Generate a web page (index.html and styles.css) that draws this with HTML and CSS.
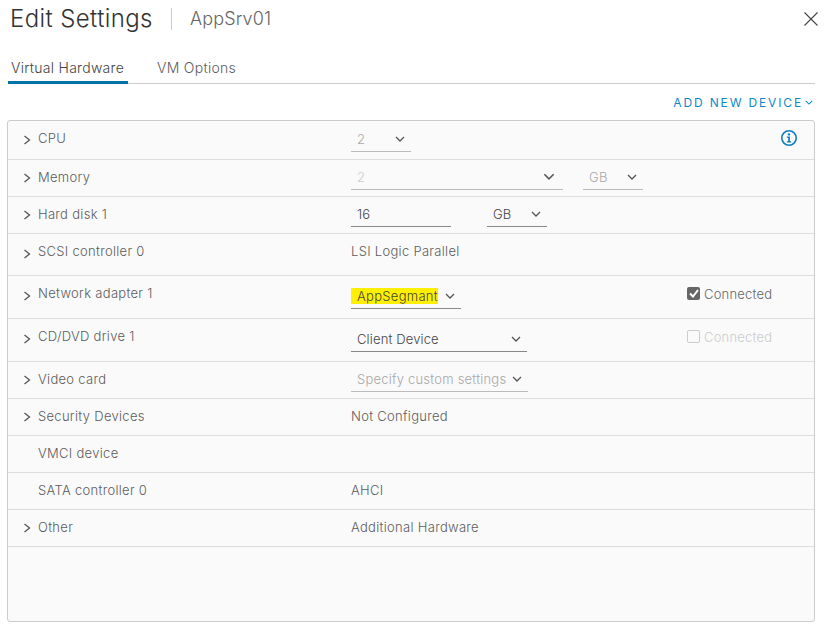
FILE: index.html
```html
<!DOCTYPE html>
<html lang="en">
<head>
<meta charset="utf-8">
<title>Edit Settings</title>
<link rel="stylesheet" href="styles.css">
</head>
<body>
<svg class="defs" width="0" height="0" aria-hidden="true">
  <symbol id="chev-r" viewBox="0 0 8 10"><path d="M1.5 1 L6.5 5 L1.5 9" fill="none" stroke="currentColor" stroke-width="1.3"/></symbol>
  <symbol id="chev-d" viewBox="0 0 10 6"><path d="M1 1 L5 5 L9 1" fill="none" stroke="currentColor" stroke-width="1.3"/></symbol>
</svg>
<header class="head">
  <h1 class="title">Edit Settings</h1>
  <span class="vm">AppSrv01</span>
  <svg class="close" width="14" height="14" viewBox="0 0 14 14"><path d="M0.5 0.5 L13.5 13.5 M13.5 0.5 L0.5 13.5" fill="none" stroke="#444" stroke-width="1.1"/></svg>
</header>
<nav class="tabs">
  <span class="tab active">Virtual Hardware</span>
  <span class="tab">VM Options</span>
</nav>
<div class="actions">
  <span class="add">ADD NEW DEVICE</span>
  <svg class="add-chev" width="8" height="5"><use href="#chev-d"/></svg>
</div>
<section class="panel">
  <div class="row r39">
    <svg class="cr"><use href="#chev-r"/></svg><span class="label">CPU</span>
    <div class="val">
      <span class="sel dis w60"><span class="t">2</span><svg class="cd"><use href="#chev-d"/></svg></span>
    </div>
    <svg class="info" width="18" height="18" viewBox="0 0 18 18"><circle cx="9" cy="9" r="7.2" fill="none" stroke="#0e7fb8" stroke-width="1.6"/><circle cx="9" cy="5.4" r="1.2" fill="#0e7fb8"/><path d="M6.9 7.6 H9.9 V12.2 H11.2 V13.4 H6.9 V12.2 H8.2 V8.8 H6.9 Z" fill="#0e7fb8"/></svg>
  </div>
  <div class="row">
    <svg class="cr"><use href="#chev-r"/></svg><span class="label">Memory</span>
    <div class="val">
      <span class="sel faint w212"><span class="t">2</span><svg class="cd big"><use href="#chev-d"/></svg></span>
      <span class="sel dis w60 gap20"><span class="t">GB</span><svg class="cd"><use href="#chev-d"/></svg></span>
    </div>
  </div>
  <div class="row">
    <svg class="cr"><use href="#chev-r"/></svg><span class="label">Hard disk 1</span>
    <div class="val">
      <span class="sel on w100"><span class="t">16</span></span>
      <span class="sel on w60 gap36"><span class="t">GB</span><svg class="cd"><use href="#chev-d"/></svg></span>
    </div>
  </div>
  <div class="row r42 low">
    <svg class="cr"><use href="#chev-r"/></svg><span class="label">SCSI controller 0</span>
    <div class="val"><span class="plain">LSI Logic Parallel</span></div>
  </div>
  <div class="row r43 low">
    <svg class="cr"><use href="#chev-r"/></svg><span class="label">Network adapter 1</span>
    <div class="val">
      <span class="sel on w110 tall"><span class="t hl">AppSegmant</span><svg class="cd"><use href="#chev-d"/></svg></span>
    </div>
    <label class="check"><span class="box checked"><svg width="10" height="9" viewBox="0 0 10 9"><path d="M1 4.5 L4 7.5 L9 1" fill="none" stroke="#fff" stroke-width="2"/></svg></span>Connected</label>
  </div>
  <div class="row r43 low">
    <svg class="cr"><use href="#chev-r"/></svg><span class="label">CD/DVD drive 1</span>
    <div class="val">
      <span class="sel on w176 tall"><span class="t">Client Device</span><svg class="cd"><use href="#chev-d"/></svg></span>
    </div>
    <label class="check off"><span class="box"></span>Connected</label>
  </div>
  <div class="row">
    <svg class="cr"><use href="#chev-r"/></svg><span class="label">Video card</span>
    <div class="val">
      <span class="sel dis w177"><span class="t">Specify custom settings</span><svg class="cd"><use href="#chev-d"/></svg></span>
    </div>
  </div>
  <div class="row">
    <svg class="cr"><use href="#chev-r"/></svg><span class="label">Security Devices</span>
    <div class="val"><span class="plain">Not Configured</span></div>
  </div>
  <div class="row">
    <span class="cr"></span><span class="label">VMCI device</span>
  </div>
  <div class="row">
    <span class="cr"></span><span class="label">SATA controller 0</span>
    <div class="val"><span class="plain">AHCI</span></div>
  </div>
  <div class="row">
    <svg class="cr"><use href="#chev-r"/></svg><span class="label">Other</span>
    <div class="val"><span class="plain">Additional Hardware</span></div>
  </div>
</section>
</body>
</html>
```

FILE: styles.css
```css
* { box-sizing: border-box; }
html, body { margin: 0; padding: 0; }
body {
  width: 830px;
  height: 634px;
  overflow: hidden;
  background: #fff;
  font-family: Inter, "Liberation Sans", sans-serif;
  color: #5c5c5c;
}
.defs { position: absolute; }

.head {
  display: flex;
  align-items: center;
  height: 38px;
  padding: 0 12px 0 10px;
}
.title {
  margin: 0;
  font-size: 24px;
  font-weight: 300;
  line-height: 22px;
  color: #333;
  letter-spacing: 0.4px;
  width: 161px;
  white-space: nowrap;
}
.vm {
  border-left: 1px solid #ccc;
  height: 22px;
  line-height: 22px;
  padding-left: 18px;
  font-size: 18px;
  font-weight: 300;
  letter-spacing: 0.12px;
  color: #666;
}
.close { margin-left: auto; }

.tabs {
  display: flex;
  margin: 15px 15px 0 8px;
  height: 31px;
  border-bottom: 1px solid #ccc;
}
.tab {
  padding: 6px 3px 0;
  font-size: 14px;
  font-weight: 350;
  line-height: 18px;
  color: #5c5c5c;
  margin-right: 26px;
  letter-spacing: 0.28px;
}
.tab.active {
  color: #444;
  width: 120px;
  padding: 6px 0 0 3px;
  margin-right: 26px;
  border-bottom: 3px solid #0072a3;
  height: 31px;
}
.actions {
  display: flex;
  justify-content: flex-end;
  align-items: center;
  height: 36px;
  padding-right: 17px;
  color: #0e8ac8;
}
.add {
  font-size: 12px;
  font-weight: 400;
  letter-spacing: 1.85px;
}
.add-chev { margin-left: 2px; color: #0e8ac8; }

.panel {
  width: 808px;
  height: 502px;
  margin-left: 7px;
  background: #fafafa;
  border: 1px solid #ccc;
  border-radius: 3px;
}
.row {
  position: relative;
  display: flex;
  align-items: center;
  height: 37px;
  padding-left: 15px;
  border-bottom: 1px solid #ddd;
  font-size: 13px;
  font-weight: 350;
  letter-spacing: 0.3px;
}
.r39 { height: 39px; }
.r42 { height: 42px; }
.r43 { height: 43px; }
.row.low { align-items: flex-start; padding-top: 9px; }
.cr { width: 8px; height: 10px; flex: none; color: #555; margin-right: 7px; }
.low .cr { margin-top: 6px; }
.label { width: 313px; flex: none; white-space: nowrap; padding-bottom: 2px; }
.r39 .label { padding-bottom: 4px; }
.val { display: flex; align-items: center; }
.plain { padding-bottom: 2px; }

.sel {
  display: flex;
  align-items: center;
  justify-content: space-between;
  height: 23px;
  padding: 0 6px 2px 6px;
  border-bottom: 1px solid #888;
  color: #444;
  letter-spacing: 0.14px;
  white-space: nowrap;
}
.sel.tall { height: 24px; }
.w60 { width: 60px; }
.w100 { width: 100px; }
.w110 { width: 110px; padding-left: 0; }
.w176 { width: 176px; }
.w177 { width: 177px; }
.w212 { width: 212px; padding-right: 8px; }
.gap20 { margin-left: 20px; }
.gap36 { margin-left: 36px; }
.sel.dis { color: #a8a8a8; border-bottom-color: #bbb; letter-spacing: 0.22px; }
.sel.faint { color: #ccc; border-bottom-color: #bbb; }
.cd { width: 10px; height: 6px; color: #555; flex: none; }
.cd.big { width: 12px; height: 7px; }
.hl { background: #ffef00; color: #444; padding-left: 6px; margin-right: 6px; letter-spacing: 0.3px; }

.info { position: absolute; right: 16px; top: 8px; }

.check {
  position: absolute;
  left: 679px;
  top: 10px;
  display: flex;
  align-items: center;
  gap: 4px;
  color: #666;
  letter-spacing: 0.2px;
}
.box {
  width: 13px;
  height: 13px;
  margin-top: -1px;
  border-radius: 2px;
  background: #666;
  display: flex;
  align-items: center;
  justify-content: center;
}
.check.off { color: #ccc; }
.check.off .box { background: transparent; border: 1px solid #ccc; }
```
